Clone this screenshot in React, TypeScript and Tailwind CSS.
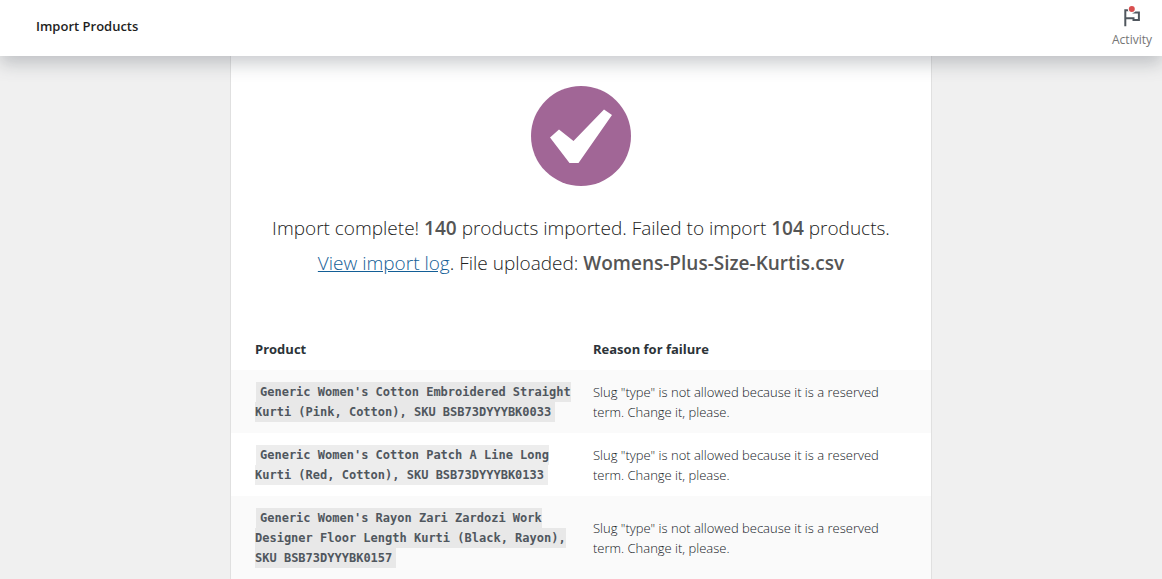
import React from 'react';

type FailedRow = {
  product: string;
  sku: string;
  reason: string;
};

const reservedSlug = 'Slug "type" is not allowed because it is a reserved term. Change it, please.';

const failedRows: FailedRow[] = [
  {
    product: "Generic Women's Cotton Embroidered Straight Kurti (Pink, Cotton)",
    sku: 'BSB73DYYYBK0033',
    reason: reservedSlug,
  },
  {
    product: "Generic Women's Cotton Patch A Line Long Kurti (Red, Cotton)",
    sku: 'BSB73DYYYBK0133',
    reason: reservedSlug,
  },
  {
    product: "Generic Women's Rayon Zari Zardozi Work Designer Floor Length Kurti (Black, Rayon)",
    sku: 'BSB73DYYYBK0157',
    reason: reservedSlug,
  },
];

const ActivityIcon: React.FC = () => (
  <svg width="24" height="24" viewBox="0 0 24 24" fill="none" aria-hidden="true">
    <path
      d="M5.3 22.3V6.3H13.5V8.6H18.9V16H13.5V14.2H5.3"
      stroke="#50575e"
      strokeWidth="2"
    />
    <circle cx="11.8" cy="5" r="4" fill="#fff" />
    <circle cx="11.8" cy="5" r="3" fill="#d94f4f" />
  </svg>
);

const Header: React.FC = () => (
  <header className="sticky top-0 z-10 flex h-14 items-center justify-between bg-white shadow-[0_8px_16px_0_rgba(85,93,102,0.3)]">
    <h1 className="pb-1 pl-9 text-[13px] leading-5 font-semibold text-[#1e1e1e]">Import Products</h1>
    <button type="button" className="flex w-[60px] flex-col items-center text-[#757575]">
      <ActivityIcon />
      <span className="text-[12px] leading-6">Activity</span>
    </button>
  </header>
);

const CompleteIcon: React.FC = () => (
  <svg width="101" height="100" viewBox="0 0 101 100" aria-hidden="true">
    <circle cx="50" cy="50" r="50" fill="#a16696" />
    <path d="M19 51.5L28 43.5L42.5 55L73 23.5L81 29L47.5 77H38.5Z" fill="#fff" />
  </svg>
);

const FailureTable: React.FC = () => (
  <table className="w-full table-fixed border-collapse text-left">
    <thead>
      <tr className="text-[13px] leading-5 text-[#2c3338]">
        <th className="w-[340px] pt-3 pb-[11px] pl-6 font-bold">Product</th>
        <th className="pt-3 pr-6 pb-[11px] pl-[22px] font-bold">Reason for failure</th>
      </tr>
    </thead>
    <tbody>
      {failedRows.map((row) => (
        <tr key={row.sku} className="leading-5 odd:bg-[#fafafa]">
          <th scope="row" className="pt-3 pb-[11px] pl-6 font-['DejaVu_Sans_Mono',monospace] text-[12px] font-bold text-[#50575e]">
            <code className="mx-px bg-black/7 px-1 py-[3px] font-['DejaVu_Sans_Mono',monospace]">
              {row.product}, SKU {row.sku}
            </code>
          </th>
          <td className="pt-3 pr-8 pb-[11px] pl-[22px] text-[13px] font-light text-[#14191e]">{row.reason}</td>
        </tr>
      ))}
    </tbody>
  </table>
);

const App: React.FC = () => {
  return (
    <div className="min-h-screen bg-[#f0f0f0] font-['Open_Sans',sans-serif]">
      <Header />
      <main className="mx-auto w-full max-w-[702px] border-x border-[#e0e0e0] bg-white">
        <section className="flex flex-col items-center px-6 pt-[30px] pb-[46px] text-center">
          <CompleteIcon />
          <p className="mt-[25px] text-[19px] leading-[35px] font-light text-[#222]">
            Import complete! <strong className="font-semibold text-[#555]">140</strong> products imported. Failed to
            import <strong className="font-semibold text-[#555]">104</strong> products.{' '}
            <a href="#import-log" className="text-[#135e96] underline">View import log</a>. File uploaded:{' '}
            <strong className="font-semibold text-[#555]">Womens-Plus-Size-Kurtis.csv</strong>
          </p>
        </section>
        <div id="import-log">
          <FailureTable />
        </div>
      </main>
    </div>
  );
};

export default App;
